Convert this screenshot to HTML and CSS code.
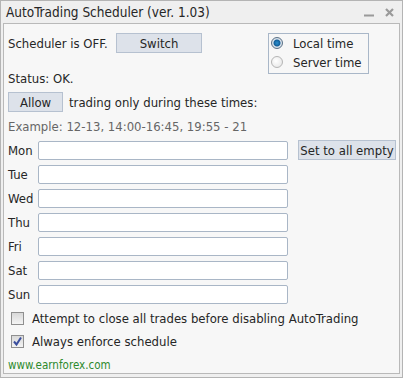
FILE: index.html
```html
<!DOCTYPE html>
<html lang="en">
<head>
  <meta charset="UTF-8" />
  <title>AutoTrading Scheduler</title>
  <link rel="stylesheet" href="styles.css">
</head>
<body>
  <div class="window">
    <div class="titlebar">
      <span class="title">AutoTrading Scheduler (ver. 1.03)</span>
      <span class="controls">
        <svg width="10" height="3" viewBox="0 0 10 3"><rect x="0" y="0.5" width="10" height="2" fill="#9a9a9a"/></svg>
        <svg width="9" height="9" viewBox="0 0 9 9"><path d="M1 1L8 8M8 1L1 8" stroke="#9a9a9a" stroke-width="2.2"/></svg>
      </span>
    </div>
    <div class="panel">
      <div class="top">
        <div class="top-left">
          <div class="row">
            <span class="state">Scheduler is OFF.</span>
            <button class="btn switch">Switch</button>
          </div>
          <div class="status">Status: OK.</div>
        </div>
        <div class="radios">
          <label class="radio"><span class="dot on"></span>Local time</label>
          <label class="radio"><span class="dot"></span>Server time</label>
        </div>
      </div>
      <div class="row allow-row">
        <button class="btn allow">Allow</button>
        <span>trading only during these times:</span>
      </div>
      <div class="example">Example: 12-13, 14:00-16:45, 19:55 - 21</div>
      <div class="days">
        <span class="day">Mon</span><input type="text" class="times" /><button class="btn clear">Set to all empty</button>
        <span class="day">Tue</span><input type="text" class="times" /><span></span>
        <span class="day">Wed</span><input type="text" class="times" /><span></span>
        <span class="day">Thu</span><input type="text" class="times" /><span></span>
        <span class="day">Fri</span><input type="text" class="times" /><span></span>
        <span class="day">Sat</span><input type="text" class="times" /><span></span>
        <span class="day">Sun</span><input type="text" class="times" /><span></span>
      </div>
      <div class="checks">
        <label class="check"><span class="box"></span>Attempt to close all trades before disabling AutoTrading</label>
        <label class="check"><span class="box">
          <svg width="11" height="11" viewBox="0 0 11 11"><path d="M2 5.5L4.5 8.5L9 1.5" stroke="#3b4f9e" stroke-width="2" fill="none"/></svg>
        </span>Always enforce schedule</label>
      </div>
      <div class="site">www.earnforex.com</div>
    </div>
  </div>
</body>
</html>
```
FILE: styles.css
```css
body {
  margin: 0;
  font-family: "DejaVu Sans Condensed", "DejaVu Sans", sans-serif;
  font-size: 13px;
  color: #262626;
  background: #ffffff;
}
.window {
  width: 403px;
  height: 378px;
  box-sizing: border-box;
  border: 1px solid #b4b4b4;
  background: #efefef;
  padding: 0 2px 3px 2px;
  display: flex;
  flex-direction: column;
}
.titlebar {
  flex-shrink: 0;
  height: 22px;
  display: flex;
  align-items: center;
  justify-content: space-between;
  padding-left: 3px;
  font-size: 13.5px;
}
.controls {
  display: flex;
  align-items: center;
  gap: 11px;
  padding-right: 6px;
}
.controls svg:first-child {
  margin-top: 7px;
}
.panel {
  flex: 1;
  min-height: 0;
  overflow: hidden;
  border: 1px solid #b9b9b9;
  background: #f7f7f7;
  padding: 9px 4px 0 4px;
}
.top {
  display: flex;
}
.top-left {
  width: 260px;
}
.row {
  display: flex;
  align-items: center;
}
.state {
  width: 108px;
}
.btn {
  font-family: inherit;
  font-size: 13px;
  color: #262626;
  background: #dde2ea;
  border: 1px solid #b6c1d0;
  height: 20px;
  padding: 0;
  margin: 0;
}
.switch {
  width: 86px;
}
.status {
  margin-top: 18px;
}
.radios {
  width: 101px;
  height: 41px;
  box-sizing: border-box;
  border: 1px solid #a9b7c8;
  padding: 1px 0 0 2px;
  display: flex;
  flex-direction: column;
  gap: 3px;
}
.radio {
  display: flex;
  align-items: center;
  gap: 10px;
  height: 16px;
}
.dot {
  width: 10px;
  height: 10px;
  border-radius: 50%;
  border: 1px solid #b5b5b5;
  background: radial-gradient(circle at 40% 40%, #ffffff, #e2e2e2);
}
.dot.on {
  border-color: #5a7188;
  background: radial-gradient(circle at 50% 50%, #2a8fd0 0, #13609a 3px, #dfe6ee 4px, #c6d0da 6px);
}
.allow-row {
  margin-top: 6px;
  gap: 6px;
}
.allow {
  width: 55px;
}
.example {
  color: #666666;
  margin-top: 6px;
  height: 18px;
  line-height: 18px;
}
.days {
  display: grid;
  grid-template-columns: 30px 250px 98px;
  row-gap: 5px;
  margin-top: 4px;
  align-items: center;
}
.day {
  height: 19px;
  line-height: 19px;
}
.times {
  box-sizing: border-box;
  height: 19px;
  width: 250px;
  margin: 0;
  border: 1px solid #a9b6c6;
  border-radius: 2px;
  background: #ffffff;
}
.clear {
  width: 98px;
  margin-left: 10px;
}
.checks {
  margin-top: 6px;
  display: flex;
  flex-direction: column;
  gap: 7px;
  padding-left: 3px;
}
.check {
  display: flex;
  align-items: center;
  gap: 8px;
  height: 16px;
}
.box {
  width: 11px;
  height: 11px;
  border: 1px solid #8f8f8f;
  background: linear-gradient(#d8d8d8, #f4f4f4);
  display: flex;
  align-items: center;
  justify-content: center;
}
.site {
  margin-top: 9px;
  color: #2d8a2d;
  font-size: 11.5px;
}
```
